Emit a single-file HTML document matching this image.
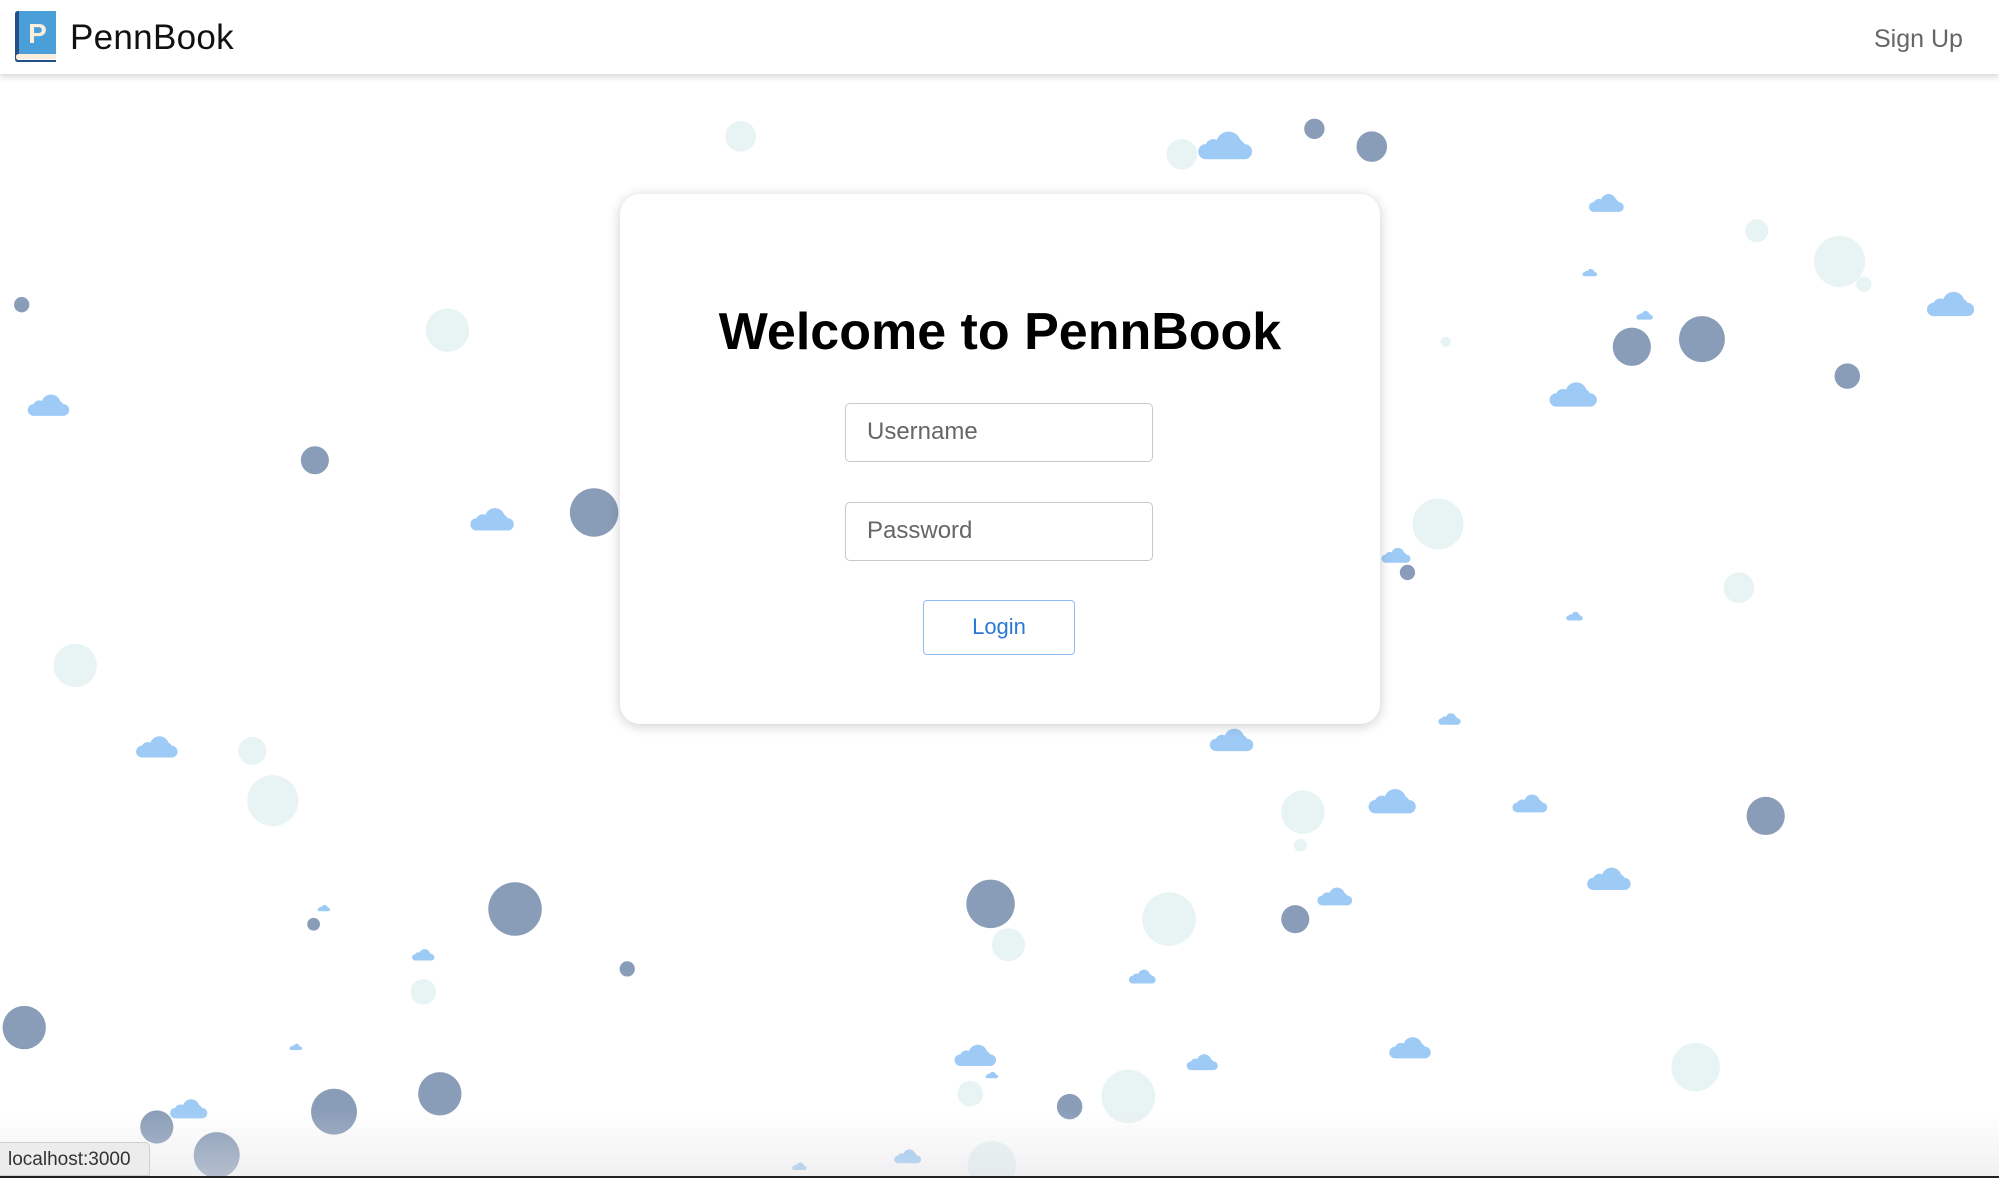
<!DOCTYPE html>
<html><head><meta charset="utf-8"><style>
html,body{margin:0;padding:0;width:1999px;height:1178px;overflow:hidden;background:#fff;font-family:"Liberation Sans",sans-serif;}
#bg{position:absolute;left:0;top:0;}
.nav{position:absolute;left:0;top:0;width:1999px;height:74px;background:#fff;box-shadow:0 3px 6px rgba(0,0,0,0.16);z-index:2;}
.brand{position:absolute;left:70px;top:18px;font-size:35px;color:#111;letter-spacing:0.3px;}
.signup{position:absolute;left:1874px;top:25px;font-size:25px;color:#666;}
.card{position:absolute;left:620px;top:194px;width:760px;height:530px;background:#fff;border-radius:20px;box-shadow:0 2px 12px rgba(0,0,0,0.2);z-index:1;}
.card h1{position:absolute;left:0;width:760px;top:300px;margin:0;}
h1{text-align:center;font-size:52px;font-weight:bold;color:#000;top:108px!important;}
.inp{position:absolute;left:225px;width:308px;height:59px;border:1.5px solid #c8c8c8;border-radius:5px;box-sizing:border-box;font-size:24px;color:#666;padding-left:21px;line-height:56px;}
.btn{position:absolute;left:303px;top:406px;width:152px;height:55px;border:1.5px solid #90bdf0;border-radius:4px;box-sizing:border-box;text-align:center;line-height:52px;color:#2a7ad5;font-size:22px;}
.tip{position:absolute;left:0;top:1142px;width:150px;height:34px;background:#ececec;border:1px solid #d0d0d0;border-left:none;border-radius:0 5px 0 0;font-size:19px;color:#333;line-height:34px;padding-left:8px;box-sizing:border-box;z-index:3;}
.fade{position:absolute;left:0;top:1110px;width:1999px;height:68px;background:linear-gradient(rgba(235,235,235,0),rgba(225,225,228,0.5));}
.bl{position:absolute;left:0;top:1176px;width:1999px;height:2px;background:#222;z-index:4;}
</style></head><body>
<svg id="bg" width="1999" height="1178" viewBox="0 0 1568 924">
<defs><symbol id="c" viewBox="0 0 40 24"><path d="M6 23 A5.5 5.5 0 0 1 6 12 A6 6 0 0 1 14 9 A9 9 0 0 1 31 9 A7 7 0 0 1 34 12 A5.5 5.5 0 0 1 34 23 Z" fill="#9ecbf6"/></symbol></defs>
<g fill="#e8f3f3">
<circle cx="581" cy="107" r="12"/><circle cx="927" cy="121" r="12"/><circle cx="1378" cy="181" r="9"/><circle cx="1443" cy="205" r="20"/><circle cx="1462" cy="223" r="6"/><circle cx="351" cy="259" r="17"/><circle cx="1134" cy="268" r="4"/><circle cx="1128" cy="411" r="20"/><circle cx="1364" cy="461" r="12"/><circle cx="59" cy="522" r="17"/><circle cx="198" cy="589" r="11"/><circle cx="214" cy="628" r="20"/><circle cx="1022" cy="637" r="17"/><circle cx="1020" cy="663" r="5"/><circle cx="917" cy="721" r="21"/><circle cx="791" cy="741" r="13"/><circle cx="332" cy="778" r="10"/><circle cx="761" cy="858" r="10"/><circle cx="885" cy="860" r="21"/><circle cx="1330" cy="837" r="19"/><circle cx="778" cy="914" r="19"/>
</g>
<g fill="#8a9db8">
<circle cx="1031" cy="101" r="8"/><circle cx="1076" cy="115" r="12"/><circle cx="17" cy="239" r="6"/><circle cx="1280" cy="272" r="15"/><circle cx="1335" cy="266" r="18"/><circle cx="1449" cy="295" r="10"/><circle cx="247" cy="361" r="11"/><circle cx="466" cy="402" r="19"/><circle cx="1104" cy="449" r="6"/><circle cx="1385" cy="640" r="15"/><circle cx="404" cy="713" r="21"/><circle cx="777" cy="709" r="19"/><circle cx="246" cy="725" r="5"/><circle cx="1016" cy="721" r="11"/><circle cx="492" cy="760" r="6"/><circle cx="19" cy="806" r="17"/><circle cx="123" cy="884" r="13"/><circle cx="262" cy="872" r="18"/><circle cx="345" cy="858" r="17"/><circle cx="170" cy="906" r="18"/><circle cx="839" cy="868" r="10"/>
</g>
<g>
<use href="#c" x="939" y="100" width="44" height="26"/><use href="#c" x="1246" y="150" width="28" height="17"/><use href="#c" x="1241" y="210" width="12" height="7"/><use href="#c" x="1511" y="226" width="38" height="23"/><use href="#c" x="1283" y="243" width="14" height="8"/><use href="#c" x="1215" y="297" width="38" height="23"/><use href="#c" x="21" y="307" width="34" height="20"/><use href="#c" x="368" y="396" width="36" height="21"/><use href="#c" x="1083" y="428" width="24" height="14"/><use href="#c" x="1228" y="479" width="14" height="8"/><use href="#c" x="1128" y="558" width="18" height="11"/><use href="#c" x="106" y="575" width="34" height="20"/><use href="#c" x="948" y="569" width="36" height="21"/><use href="#c" x="1073" y="616" width="38" height="23"/><use href="#c" x="1186" y="621" width="28" height="17"/><use href="#c" x="1244" y="678" width="36" height="21"/><use href="#c" x="1033" y="694" width="28" height="17"/><use href="#c" x="249" y="709" width="10" height="6"/><use href="#c" x="323" y="743" width="18" height="11"/><use href="#c" x="885" y="759" width="22" height="13"/><use href="#c" x="227" y="818" width="10" height="6"/><use href="#c" x="748" y="817" width="34" height="20"/><use href="#c" x="1089" y="811" width="34" height="20"/><use href="#c" x="930" y="825" width="26" height="15"/><use href="#c" x="773" y="840" width="10" height="6"/><use href="#c" x="133" y="860" width="30" height="18"/><use href="#c" x="701" y="900" width="22" height="13"/><use href="#c" x="621" y="911" width="12" height="7"/>
</g>
</svg>
<div class="fade"></div>
<div class="nav">
<svg style="position:absolute;left:13px;top:10px" width="45" height="53" viewBox="0 0 45 53">
<path d="M2 4 Q2 1 5 1 L43 1 L43 48 L6 48 Q2 48 2 44 Z" fill="#234f86"/>
<rect x="6" y="1" width="37" height="43" fill="#4a9fd8"/>
<path d="M6 44 L43 44 L43 49 L6 49 Q3 49 3 46.5 Q3 44 6 44Z" fill="#fbeedd"/>
<path d="M2 44 L2 49 Q2 52 5 52 L43 52 L43 50 L6 50 Q3 50 3 47Z" fill="#234f86"/>
<text x="24.5" y="33" text-anchor="middle" font-family="Liberation Sans" font-weight="bold" font-size="28" fill="#fbeedd">P</text>
</svg>
<div class="brand">PennBook</div>
<div class="signup">Sign Up</div>
</div>
<div class="card">
<h1 style="position:absolute;top:108px;">Welcome to PennBook</h1>
<div class="inp" style="top:209px">Username</div>
<div class="inp" style="top:308px">Password</div>
<div class="btn">Login</div>
</div>
<div class="tip">localhost:3000</div>
<div class="bl"></div>
</body></html>
